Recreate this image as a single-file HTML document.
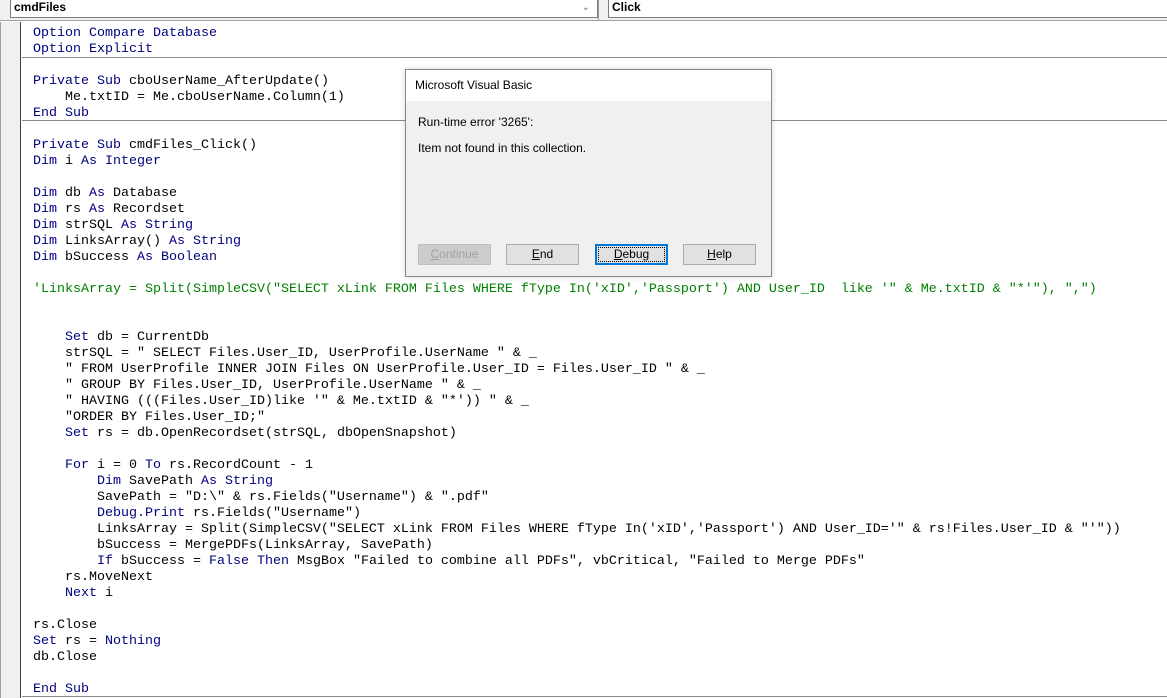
<!DOCTYPE html>
<html><head><meta charset="utf-8"><style>
*{margin:0;padding:0;box-sizing:border-box}
body{width:1167px;height:698px;overflow:hidden;background:#fff;position:relative;font-family:"Liberation Sans",sans-serif}
.top{position:absolute;left:0;top:0;width:1167px;height:21px;background:#f0f0f0;border-bottom:1px solid #a0a0a0}
.combo{position:absolute;top:0;height:18px;background:#fff;border:1px solid #7a7a7a;border-top:none;font-size:12px;padding:0 0 0 3px;line-height:14px;font-weight:600}
.margin{position:absolute;left:0;top:22px;width:21px;height:676px;background:#f0f0f0;border-left:1px solid #a0a0a0;border-right:1px solid #404040}
.code{position:absolute;left:33px;top:26px;font-family:"Liberation Mono",monospace;font-size:13.33px;line-height:16px;white-space:pre;color:#000}
.k{color:#00007f}.c{color:#008000}
.sep{position:absolute;left:22px;width:1145px;height:1px;background:#8a8a8a}
.dlg{position:absolute;left:405px;top:69px;width:367px;height:208px;background:#f0f0f0;border:1px solid #888;box-shadow:0 0 6px rgba(0,0,0,.15)}
.dt{height:31px;background:#fff;font-size:12px;padding:8px 0 0 9px}
.msg{position:absolute;left:12px;font-size:12px}
.btn{position:absolute;top:174px;width:73px;height:21px;border:1px solid #adadad;background:#e1e1e1;font-size:12px;text-align:center;line-height:19px}
</style></head><body>
<div class="top">
<div class="combo" style="left:10px;width:588px">cmdFiles<span style="position:absolute;right:7px;top:1px;font-weight:normal;color:#777;font-size:10px">&#8964;</span></div>
<div style="position:absolute;left:598px;top:0;width:1px;height:20px;background:#999"></div>
<div class="combo" style="left:608px;width:560px">Click</div>
</div>
<div class="margin"></div>
<div class="sep" style="top:57px"></div>
<div class="sep" style="top:120px"></div>
<div class="sep" style="top:696px"></div>
<div class="code"><span class="k">Option Compare Database</span>
<span class="k">Option Explicit</span>

<span class="k">Private Sub</span> cboUserName_AfterUpdate()
    Me.txtID = Me.cboUserName.Column(1)
<span class="k">End Sub</span>

<span class="k">Private Sub</span> cmdFiles_Click()
<span class="k">Dim</span> i <span class="k">As Integer</span>

<span class="k">Dim</span> db <span class="k">As</span> Database
<span class="k">Dim</span> rs <span class="k">As</span> Recordset
<span class="k">Dim</span> strSQL <span class="k">As String</span>
<span class="k">Dim</span> LinksArray() <span class="k">As String</span>
<span class="k">Dim</span> bSuccess <span class="k">As Boolean</span>

<span class="c">'LinksArray = Split(SimpleCSV("SELECT xLink FROM Files WHERE fType In('xID','Passport') AND User_ID  like '" &amp; Me.txtID &amp; "*'"), ",")</span>


    <span class="k">Set</span> db = CurrentDb
    strSQL = " SELECT Files.User_ID, UserProfile.UserName " &amp; _
    " FROM UserProfile INNER JOIN Files ON UserProfile.User_ID = Files.User_ID " &amp; _
    " GROUP BY Files.User_ID, UserProfile.UserName " &amp; _
    " HAVING (((Files.User_ID)like '" &amp; Me.txtID &amp; "*')) " &amp; _
    "ORDER BY Files.User_ID;"
    <span class="k">Set</span> rs = db.OpenRecordset(strSQL, dbOpenSnapshot)

    <span class="k">For</span> i = 0 <span class="k">To</span> rs.RecordCount - 1
        <span class="k">Dim</span> SavePath <span class="k">As String</span>
        SavePath = "D:\" &amp; rs.Fields("Username") &amp; ".pdf"
        <span class="k">Debug.Print</span> rs.Fields("Username")
        LinksArray = Split(SimpleCSV("SELECT xLink FROM Files WHERE fType In('xID','Passport') AND User_ID='" &amp; rs!Files.User_ID &amp; "'"))
        bSuccess = MergePDFs(LinksArray, SavePath)
        <span class="k">If</span> bSuccess = <span class="k">False Then</span> MsgBox "Failed to combine all PDFs", vbCritical, "Failed to Merge PDFs"
    rs.MoveNext
    <span class="k">Next</span> i

rs.Close
<span class="k">Set</span> rs = <span class="k">Nothing</span>
db.Close

<span class="k">End Sub</span></div>
<div class="dlg">
<div class="dt">Microsoft Visual Basic</div>
<div class="msg" style="top:45px">Run-time error '3265':</div>
<div class="msg" style="top:71px">Item not found in this collection.</div>
<div class="btn" style="left:12px;color:#a0a0a0;background:#cccccc;border-color:#bfbfbf"><u>C</u>ontinue</div>
<div class="btn" style="left:100px"><u>E</u>nd</div>
<div class="btn" style="left:189px;border:2px solid #0078d7;line-height:17px"><span style="border:1px dotted #000;display:block;margin:1px;line-height:13px"><u>D</u>ebug</span></div>
<div class="btn" style="left:277px"><u>H</u>elp</div>
</div>
</body></html>
